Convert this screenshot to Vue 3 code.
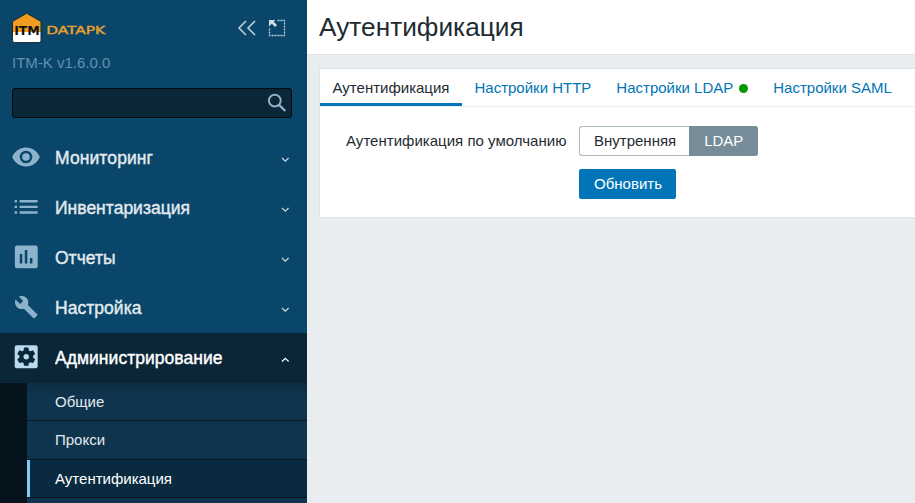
<script setup>
const menu = [
  { label: 'Мониторинг', icon: 'eye', width: 98 },
  { label: 'Инвентаризация', icon: 'list', width: 135 },
  { label: 'Отчеты', icon: 'chart', width: 60.5 },
  { label: 'Настройка', icon: 'wrench', width: 86.5 },
  { label: 'Администрирование', icon: 'gear', width: 167.5, open: true },
]
const submenu = [
  { label: 'Общие' },
  { label: 'Прокси' },
  { label: 'Аутентификация', active: true },
]
const tabs = [
  { label: 'Аутентификация', active: true },
  { label: 'Настройки HTTP' },
  { label: 'Настройки LDAP', dot: true },
  { label: 'Настройки SAML' },
]
</script>

<template>
  <div class="layout">
    <aside class="sidebar">
      <div class="brand">
        <svg class="logo" width="96" height="32" viewBox="0 0 96 32">
          <path d="M.5 9.500 14.700 1.300l14.300 8.200v18.900q0 2.200-2.200 2.200H2.700Q.5 30.600.5 28.400Z" fill="#fff" />
          <path d="M.5 9.500 14.700 1.300l14.300 8.200v10.500H.5Z" fill="#f29b20" />
          <path d="M.5 9.500 14.700 1.300l14.300 8.200v18.900q0 2.200-2.200 2.200H2.700Q.5 30.600.5 28.400Z" fill="none" stroke="#182630" stroke-width="1" />
          <text class="logo-itm" x="2.2" y="22.800" textLength="25.600" lengthAdjust="spacingAndGlyphs">ITM</text>
          <text class="logo-name" x="34.2" y="22.400" textLength="59" lengthAdjust="spacingAndGlyphs">DATAPK</text>
        </svg>
        <div class="tools">
          <svg width="20" height="20" viewBox="0 0 20 20" fill="none" stroke="#bfd0dc" stroke-width="1.6">
            <path d="M9 3 2 10l7 7M18 3l-7 7 7 7" />
          </svg>
          <svg width="18" height="18" viewBox="0 0 18 18">
            <path d="M9.500 1.500h7v15h-15V9.500" fill="none" stroke="#b9ccd9" stroke-width="1.300" stroke-dasharray="2 1" />
            <path d="M1 1h6.500L5.700 2.800 9 6.100 7.100 8 3.800 4.700 1 7.500Z" fill="#d3dfe7" />
          </svg>
        </div>
      </div>
      <div class="version">ITM-K v1.6.0.0</div>
      <div class="search">
        <svg width="20" height="20" viewBox="0 0 20 20" fill="none" stroke="#8fb0c6">
          <circle cx="7.8" cy="7.6" r="5.9" stroke-width="2" />
          <path d="m12 11.8 6.3 6.2" stroke-width="2.4" />
        </svg>
      </div>
      <nav class="menu">
        <div v-for="m in menu" :key="m.label" class="item" :class="{ open: m.open }">
          <svg v-if="m.icon === 'eye'" class="icon" width="30" height="30" viewBox="0 0 30 30">
            <path fill-rule="evenodd" d="M15 5.500C8.800 5.500 3.400 9.400 1.200 15c2.200 5.600 7.600 9.500 13.800 9.500S26.600 20.600 28.800 15C26.600 9.400 21.200 5.500 15 5.500ZM15 21.300a6.300 6.300 0 1 1 0-12.600 6.300 6.300 0 0 1 0 12.600Z" />
            <circle cx="15" cy="15" r="3.800" />
          </svg>
          <svg v-else-if="m.icon === 'list'" class="icon" width="30" height="30" viewBox="0 0 30 30">
            <path d="M3.600 8h2.400v2.400H3.600ZM3.600 13.700h2.400v2.400H3.600ZM3.600 19.300h2.400v2.400H3.600ZM8.600 8h18v2.400h-18ZM8.600 13.700h18v2.400h-18ZM8.600 19.300h18v2.400h-18Z" />
          </svg>
          <svg v-else-if="m.icon === 'chart'" class="icon" width="30" height="30" viewBox="0 0 30 30">
            <path fill-rule="evenodd" d="M5.900 3.400h18.800q2 0 2 2v18.800q0 2-2 2H5.900q-2 0-2-2V5.400q0-2 2-2ZM8.800 12v9.500h2.500V12ZM13.800 8v13.500h2.500V8ZM18.900 16v5.500h2.500V16Z" />
          </svg>
          <svg v-else-if="m.icon === 'wrench'" class="icon" width="30" height="30" viewBox="0 0 30 30">
            <path transform="translate(3 2.800) scale(1.020)" d="M22.700 19l-9.100-9.100c.900-2.300.400-5-1.500-6.900-2-2-5-2.400-7.400-1.300L9 6 6 9 1.600 4.700C.400 7.100.900 10.100 2.900 12.100c1.900 1.900 4.600 2.400 6.900 1.500l9.100 9.100c.400.400 1 .400 1.400 0l2.300-2.300c.500-.400.500-1.100.100-1.400z" />
          </svg>
          <svg v-else class="icon" width="30" height="30" viewBox="0 0 30 30">
            <rect x="3.700" y="3.300" width="23" height="23" rx="2" />
            <path class="cog" transform="translate(4.300 3.800) scale(.91)" d="M19.430 12.980c.040-.320.070-.640.070-.980s-.030-.660-.070-.980l2.110-1.650c.190-.150.240-.420.120-.640l-2-3.460c-.120-.220-.390-.300-.610-.220l-2.490 1c-.520-.400-1.080-.730-1.690-.980l-.380-2.650C14.460 2.180 14.250 2 14 2h-4c-.250 0-.460.180-.490.420l-.380 2.650c-.610.250-1.170.590-1.690.980l-2.490-1c-.230-.090-.490 0-.610.220l-2 3.460c-.130.220-.070.490.120.640l2.110 1.650c-.040.320-.070.650-.070.980s.030.660.070.980l-2.110 1.650c-.190.150-.240.420-.120.640l2 3.460c.120.220.390.300.610.220l2.490-1c.520.400 1.080.730 1.690.980l.380 2.650c.030.240.240.420.490.420h4c.250 0 .460-.180.490-.420l.380-2.650c.610-.250 1.170-.590 1.690-.980l2.490 1c.230.090.490 0 .610-.220l2-3.460c.120-.220.070-.490-.120-.640zM12 15a3 3 0 1 1 0-6 3 3 0 0 1 0 6Z" />
          </svg>
          <svg class="label" width="200" height="30">
            <text x="0" y="21" :textLength="m.width">{{ m.label }}</text>
          </svg>
          <svg class="chevron" width="10" height="8" viewBox="0 0 10 8">
            <path :d="m.open ? 'M2 5.500 5.300 2.300 8.600 5.500' : 'M2 2 5.300 5.200 8.600 2'" />
          </svg>
        </div>
      </nav>
      <div class="submenu">
        <div v-for="s in submenu" :key="s.label" class="sub" :class="{ active: s.active }">{{ s.label }}</div>
      </div>
    </aside>

    <main class="content">
      <header class="title"><h1>Аутентификация</h1></header>
      <section class="card">
        <div class="tabs">
          <div v-for="t in tabs" :key="t.label" class="tab" :class="{ active: t.active }">
            {{ t.label }}<span v-if="t.dot" class="dot"></span>
          </div>
        </div>
        <div class="form">
          <div class="field-label">Аутентификация по умолчанию</div>
          <div class="segmented">
            <div class="option">Внутренняя</div>
            <div class="option selected">LDAP</div>
          </div>
          <button class="update" type="button">Обновить</button>
        </div>
      </section>
    </main>
  </div>
</template>

<style>
body {
  background: #e9edf0;
  overflow: hidden;
}
</style>

<style scoped>
.layout {
  display: flex;
  width: 100vw;
  height: 100vh;
  overflow: hidden;
  font: 15px/18px "Liberation Sans", Arial, sans-serif;
  color: #1f2c33;
}
.layout * {
  box-sizing: border-box;
}
.sidebar {
  width: 307px;
  flex: none;
  display: flex;
  flex-direction: column;
  background: #0a466a;
  overflow: hidden;
}
.brand {
  display: flex;
  justify-content: space-between;
  padding: 12px 21px 0 12px;
  height: 53px;
  flex: none;
}
.logo-itm,
.logo-name {
  font-family: "DejaVu Sans", sans-serif;
  font-weight: bold;
  font-size: 12px;
  fill: #101418;
}
.logo-name {
  font-weight: normal;
  font-size: 11.2px;
  fill: #e9a02d;
  stroke: #e9a02d;
  stroke-width: 0.4px;
}
.tools {
  display: flex;
  gap: 11px;
  padding-top: 6px;
}
.tools svg + svg {
  margin-top: 1px;
}
.version {
  flex: none;
  height: 35px;
  padding: 1px 12px;
  font-size: 15px;
  color: #6591af;
}
.search {
  flex: none;
  display: flex;
  justify-content: flex-end;
  align-items: center;
  height: 30px;
  margin: 0 15px 15px 12px;
  padding-right: 4px;
  background: #0a2637;
  border: 1px solid #010b13;
  border-radius: 3px;
}
.menu {
  flex: none;
}
.item {
  display: flex;
  align-items: center;
  height: 50px;
  padding: 0 17px 0 11px;
}
.icon {
  fill: #8db3cc;
  flex: none;
  margin-top: -2px;
}
.label {
  margin-left: 14px;
  flex: none;
  fill: #e3eaef;
  stroke: #e3eaef;
  stroke-width: 0.4px;
  font-size: 17.5px;
}
.chevron {
  margin: 3px 0 0 auto;
  fill: none;
  stroke: #c4d3df;
  stroke-width: 1.3;
}
.open {
  background: #0a2637;
}
.open .icon {
  fill: #b9d9ed;
}
.open .icon .cog {
  fill: #0a2637;
}
.open .label {
  fill: #fff;
  stroke: #fff;
}
.open .chevron {
  stroke: #fff;
}
.submenu {
  flex: 1;
  border-left: 27px solid #04131c;
  background: linear-gradient(#0c2e43, #0f344d 12px);
}
.sub {
  display: flex;
  align-items: center;
  height: 39px;
  padding-left: 28px;
  border-bottom: 1px solid #051722;
  color: #e3eaef;
}
.sub:first-child {
  height: 38px;
}
.sub.active {
  height: 38px;
  position: relative;
  padding-top: 1px;
  background: #0a2b3f;
  color: #fff;
}
.sub.active::before {
  content: "";
  position: absolute;
  left: 0;
  top: 0;
  bottom: 0;
  width: 3px;
  background: #7ecbfa;
}
.content {
  flex: 1;
  min-width: 0;
}
.title {
  height: 55px;
  padding: 11px 12px;
  background: #fff;
  border-bottom: 1px solid #dfe4e7;
}
h1 {
  margin: 0;
  font-size: 26.25px;
  line-height: 32px;
  font-weight: normal;
}
.card {
  height: 150px;
  margin: 13px -1px 0 12px;
  background: #fff;
  border: 1px solid #dfe4e7;
}
.tabs {
  display: flex;
  height: 38px;
  border-bottom: 1px solid #ebeef0;
  white-space: nowrap;
}
.tab {
  display: flex;
  align-items: center;
  padding: 3px 12.5px 0;
  border-bottom: 3px solid transparent;
  color: #0275b8;
}
.tab.active {
  color: #1f2c33;
  border-bottom-color: #0275b8;
}
.dot {
  width: 9px;
  height: 9px;
  margin: 1px 0 0 6px;
  border-radius: 50%;
  background: #009900;
}
.form {
  display: grid;
  grid-template-columns: 221px auto;
  justify-content: start;
  align-items: center;
  gap: 13px 12px;
  padding: 19px 26px;
}
.field-label {
  white-space: nowrap;
  letter-spacing: 0.02px;
}
.segmented {
  display: flex;
  height: 30px;
}
.option {
  display: flex;
  align-items: center;
  padding: 0 13px 0 14px;
  border: 1px solid #acbbc2;
  border-right: 0;
  border-radius: 3px 0 0 3px;
}
.option.selected {
  padding-right: 15px;
  border-color: #768d99;
  background: #768d99;
  color: #fff;
  border-radius: 0 3px 3px 0;
}
.update {
  grid-column: 2;
  justify-self: start;
  width: 97px;
  height: 30px;
  padding: 0 0 0 1px;
  font: inherit;
  color: #fff;
  background: #0275b8;
  border: 0;
  border-radius: 2px;
}
</style>
